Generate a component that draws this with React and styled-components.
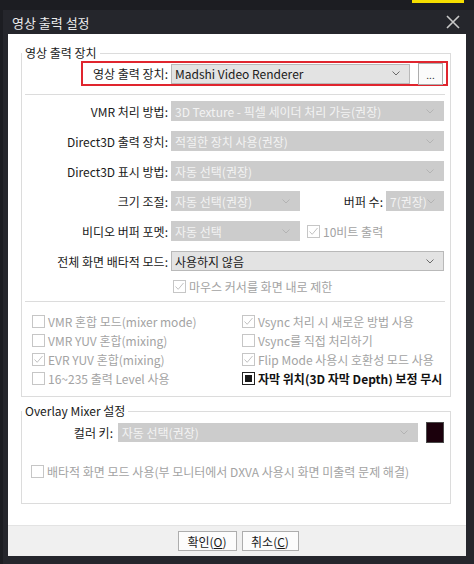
import styled, { createGlobalStyle } from 'styled-components';

const Global = createGlobalStyle`
  html, body {
    margin: 0;
    padding: 0;
    background: #1c1d22;
  }
  body {
    font-family: "Noto Sans CJK KR", "Noto Sans", sans-serif;
    font-size: 12px;
    color: #1a1a1a;
  }
`;

const Screen = styled.div`
  width: 474px;
  height: 564px;
  overflow: hidden;
  display: flex;
  flex-direction: column;
  background: #1c1d22;
`;

const TopStrip = styled.div`
  height: 10px;
  display: flex;
  justify-content: flex-end;
  padding-right: 10px;
`;

const Highlight = styled.div`
  width: 52px;
  height: 3px;
  background: #f4dd00;
`;

const Window = styled.div`
  flex: 1;
  margin-left: 3px;
  display: flex;
  flex-direction: column;
  background: #25262c;
`;

const TitleBar = styled.div`
  height: 24px;
  display: flex;
  align-items: center;
  justify-content: space-between;
  padding: 0 13px 0 9px;
  color: #ececec;
  font-size: 13px;
`;

const Body = styled.div`
  height: 522px;
  margin: 0 8px 0 5px;
  background: #ffffff;
  display: flex;
  flex-direction: column;
`;

const Main = styled.div`
  flex: 1;
  padding: 0 15px 0 13px;
`;

const Group = styled.fieldset`
  margin: ${p => p.$top}px 0 0 0;
  padding: 0 0 ${p => p.$bottom}px 0;
  border: 1px solid #dcdcdc;
  min-width: 0;

  legend {
    padding: 0 3px;
    margin-left: 0;
    line-height: 14px;
    font-size: 12px;
    color: #1a1a1a;
  }
`;

const RedBox = styled.div`
  margin: 1px 2px 0 59px;
  height: 21px;
  border: 2px solid #e0252e;
  display: flex;
  align-items: center;
  gap: 3px;
`;

const Label = styled.div`
  width: ${p => p.$w}px;
  flex: ${p => (p.$w ? 'none' : '1')};
  text-align: right;
  white-space: nowrap;
  color: #1a1a1a;
`;

const SelectBox = styled.div`
  box-sizing: border-box;
  width: ${p => (p.$w ? `${p.$w}px` : 'auto')};
  flex: ${p => (p.$w ? 'none' : '1')};
  height: ${p => p.$h || 20}px;
  display: flex;
  align-items: center;
  justify-content: space-between;
  padding: 0 9px 0 3px;
  background: ${p => (p.$disabled ? '#cccccc' : '#e3e3e3')};
  border: 1px solid ${p => (p.$disabled ? '#cccccc' : '#b9b9b9')};
  color: ${p => (p.$disabled ? '#f3f3f3' : '#1a1a1a')};
  white-space: nowrap;
  overflow: hidden;

  svg {
    flex: none;
  }
`;

const DotsButton = styled.div`
  box-sizing: border-box;
  width: 25px;
  height: 22px;
  margin-left: 5px;
  border: 1px solid #adadad;
  background: #fbfbfb;
  display: flex;
  align-items: flex-end;
  justify-content: center;
  padding-bottom: 4px;
  font-size: 10px;
  line-height: 10px;
  color: #333;
`;

const Separator = styled.div`
  height: 1px;
  background: #dcdcdc;
  margin: ${p => p.$top}px 5px 0 3px;
`;

const Rows = styled.div`
  display: flex;
  flex-direction: column;
  gap: 10px;
  margin-top: 6px;
  padding-right: 6px;
`;

const Row = styled.div`
  display: flex;
  align-items: center;
  gap: ${p => p.$gap ?? 3}px;
  height: 20px;
`;

const CheckRow = styled.div`
  display: flex;
  align-items: center;
  height: 14px;
  margin: ${p => p.$top}px 0 0 ${p => p.$left}px;
`;

const CheckGrid = styled.div`
  display: grid;
  grid-template-columns: 210px 1fr;
  grid-auto-rows: 19px;
  margin-top: 10px;
  padding-left: 10px;
  align-items: center;
`;

const CheckItem = styled.div`
  display: flex;
  align-items: center;
  gap: 3px;
  white-space: nowrap;
  color: ${p => (p.$disabled ? '#a3a3a3' : '#111')};
  font-weight: ${p => (p.$bold ? 700 : 400)};
`;

const Box = styled.div`
  box-sizing: border-box;
  width: 13px;
  height: 13px;
  flex: none;
  border: 1px solid ${p => (p.$disabled ? '#c6c6c6' : '#222')};
  background: #fff;
  display: flex;
  align-items: center;
  justify-content: center;
`;

const MixedMark = styled.div`
  width: 7px;
  height: 7px;
  background: #1a1a1a;
`;

const KeyRow = styled.div`
  display: flex;
  align-items: center;
  height: 21px;
  margin-top: 4px;
  padding-right: 6px;
`;

const Swatch = styled.div`
  box-sizing: border-box;
  width: 19px;
  height: 21px;
  margin-left: 8px;
  border: 1px solid #4a4a4a;
  background: #1b000c;
`;

const Footer = styled.div`
  height: 30px;
  border-top: 1px solid #e3e3e3;
  background: #f0f0f0;
  display: flex;
  align-items: center;
  justify-content: center;
  gap: 5px;
  padding-left: 2px;
`;

const Button = styled.div`
  box-sizing: border-box;
  width: ${p => p.$w}px;
  height: 20px;
  border: 1px solid #adadad;
  background: #fcfcfc;
  display: flex;
  align-items: center;
  justify-content: center;
  color: #1a1a1a;
`;

function Chevron({ disabled }) {
  return (
    <svg width="8" height="5" viewBox="0 0 8 5">
      <path d="M0.5 0.5 L4 4 L7.5 0.5" fill="none" stroke={disabled ? '#b3b3b3' : '#6a6a6a'} strokeWidth="1" />
    </svg>
  );
}

function Select({ value, disabled, w, h }) {
  return (
    <SelectBox $disabled={disabled} $w={w} $h={h}>
      <span>{value}</span>
      <Chevron disabled={disabled} />
    </SelectBox>
  );
}

function Check({ checked, mixed, disabled, bold, children }) {
  return (
    <CheckItem $disabled={disabled} $bold={bold}>
      <Box $disabled={disabled}>
        {checked && (
          <svg width="11" height="11" viewBox="0 0 11 11">
            <path d="M1.5 5.5 L4.2 8.3 L9.5 2" fill="none" stroke={disabled ? '#c2c2c2' : '#222'} strokeWidth="1" />
          </svg>
        )}
        {mixed && <MixedMark />}
      </Box>
      <span>{children}</span>
    </CheckItem>
  );
}

export default function App() {
  return (
    <Screen>
      <Global />
      <TopStrip>
        <Highlight />
      </TopStrip>
      <Window>
        <TitleBar>
          <span>영상 출력 설정</span>
          <svg width="16" height="16" viewBox="0 0 16 16">
            <path d="M2 2 L14 14 M14 2 L2 14" stroke="#c8c8c8" strokeWidth="1.6" />
          </svg>
        </TitleBar>
        <Body>
          <Main>
            <Group $top={12} $bottom={8}>
              <legend>영상 출력 장치</legend>
              <RedBox>
                <Label $w={85}>영상 출력 장치:</Label>
                <Select value="Madshi Video Renderer" w={239} />
                <DotsButton>...</DotsButton>
              </RedBox>
              <Separator $top={8} />
              <Rows>
                <Row>
                  <Label $w={146}>VMR 처리 방법:</Label>
                  <Select disabled value="3D Texture - 픽셀 세이더 처리 가능(권장)" />
                </Row>
                <Row>
                  <Label $w={146}>Direct3D 출력 장치:</Label>
                  <Select disabled value="적절한 장치 사용(권장)" />
                </Row>
                <Row>
                  <Label $w={146}>Direct3D 표시 방법:</Label>
                  <Select disabled value="자동 선택(권장)" />
                </Row>
                <Row>
                  <Label $w={146}>크기 조절:</Label>
                  <Select disabled value="자동 선택(권장)" w={129} />
                  <Label>버퍼 수:</Label>
                  <Select disabled value="7(권장)" w={58} />
                </Row>
                <Row>
                  <Label $w={146}>비디오 버퍼 포멧:</Label>
                  <Select disabled value="자동 선택" w={129} />
                  <CheckRow $top={0} $left={4}>
                    <Check checked disabled>10비트 출력</Check>
                  </CheckRow>
                </Row>
                <Row>
                  <Label $w={146}>전체 화면 배타적 모드:</Label>
                  <Select value="사용하지 않음" />
                </Row>
              </Rows>
              <CheckRow $top={8} $left={151}>
                <Check checked disabled>마우스 커서를 화면 내로 제한</Check>
              </CheckRow>
              <Separator $top={8} />
              <CheckGrid>
                <Check disabled>VMR 혼합 모드(mixer mode)</Check>
                <Check checked disabled>Vsync 처리 시 새로운 방법 사용</Check>
                <Check disabled>VMR YUV 혼합(mixing)</Check>
                <Check disabled>Vsync를 직접 처리하기</Check>
                <Check checked disabled>EVR YUV 혼합(mixing)</Check>
                <Check checked disabled>Flip Mode 사용시 호환성 모드 사용</Check>
                <Check disabled>16~235 출력 Level 사용</Check>
                <Check mixed bold>자막 위치(3D 자막 Depth) 보정 무시</Check>
              </CheckGrid>
            </Group>
            <Group $top={7} $bottom={25}>
              <legend>Overlay Mixer 설정</legend>
              <KeyRow>
                <Label $w={91}>컬러 키:</Label>
                <div style={{ width: 5 }} />
                <Select disabled value="자동 선택(권장)" w={300} h={19} />
                <Swatch />
              </KeyRow>
              <CheckRow $top={21} $left={9}>
                <Check disabled>배타적 화면 모드 사용(부 모니터에서 DXVA 사용시 화면 미출력 문제 해결)</Check>
              </CheckRow>
            </Group>
          </Main>
          <Footer>
            <Button $w={59}>확인(<u>O</u>)</Button>
            <Button $w={57}>취소(<u>C</u>)</Button>
          </Footer>
        </Body>
      </Window>
    </Screen>
  );
}
